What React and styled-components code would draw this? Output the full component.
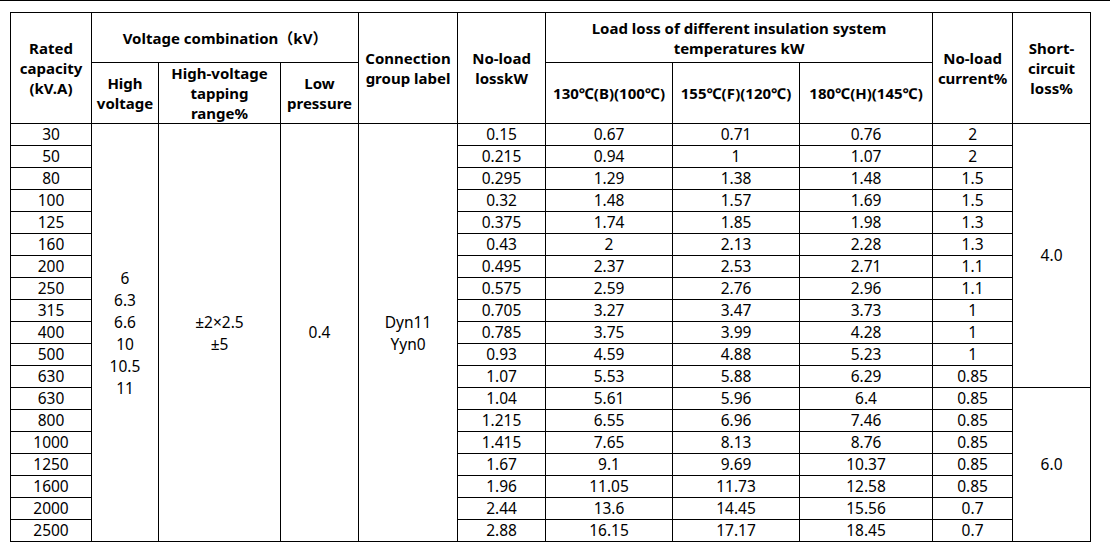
import React from "react";
import styled, { createGlobalStyle } from "styled-components";

const GlobalStyle = createGlobalStyle`
  html, body {
    margin: 0;
    padding: 0;
    background: #fff;
  }
`;

const Page = styled.div`
  border-top: 1px solid #000;
  padding: 11px 10px 12px 10px;
  font-family: "Noto Sans", "Open Sans", "Noto Sans CJK SC", sans-serif;
  color: #000;
`;

const Table = styled.table`
  border-collapse: collapse;
  table-layout: fixed;
  width: 1080px;
`;

const HeadRow = styled.tr`
  height: ${(p) => p.$h}px;
`;

const Row = styled.tr`
  height: 22px;
`;

const HeadCell = styled.th`
  border: 1px solid #000;
  padding: 0 2px;
  font-size: 15px;
  font-weight: 700;
  line-height: 20px;
  text-align: center;
  vertical-align: middle;
  white-space: ${(p) => (p.$nowrap ? "nowrap" : "normal")};
`;

const Cell = styled.td`
  border: 1px solid #000;
  padding: 0;
  font-size: 15.5px;
  line-height: 21px;
  text-align: center;
  vertical-align: middle;
`;

const Line = styled.div`
  line-height: 22px;
`;

// 열 너비: 원본 세로선 간격 그대로
const widths = [81, 67, 122, 78, 99, 88, 127, 127, 133, 80, 78];

const rows = [
  ["30", "0.15", "0.67", "0.71", "0.76", "2"],
  ["50", "0.215", "0.94", "1", "1.07", "2"],
  ["80", "0.295", "1.29", "1.38", "1.48", "1.5"],
  ["100", "0.32", "1.48", "1.57", "1.69", "1.5"],
  ["125", "0.375", "1.74", "1.85", "1.98", "1.3"],
  ["160", "0.43", "2", "2.13", "2.28", "1.3"],
  ["200", "0.495", "2.37", "2.53", "2.71", "1.1"],
  ["250", "0.575", "2.59", "2.76", "2.96", "1.1"],
  ["315", "0.705", "3.27", "3.47", "3.73", "1"],
  ["400", "0.785", "3.75", "3.99", "4.28", "1"],
  ["500", "0.93", "4.59", "4.88", "5.23", "1"],
  ["630", "1.07", "5.53", "5.88", "6.29", "0.85"],
  ["630", "1.04", "5.61", "5.96", "6.4", "0.85"],
  ["800", "1.215", "6.55", "6.96", "7.46", "0.85"],
  ["1000", "1.415", "7.65", "8.13", "8.76", "0.85"],
  ["1250", "1.67", "9.1", "9.69", "10.37", "0.85"],
  ["1600", "1.96", "11.05", "11.73", "12.58", "0.85"],
  ["2000", "2.44", "13.6", "14.45", "15.56", "0.7"],
  ["2500", "2.88", "16.15", "17.17", "18.45", "0.7"],
];

const highVoltages = ["6", "6.3", "6.6", "10", "10.5", "11"];

export default function App() {
  return (
    <>
      <GlobalStyle />
      <Page>
        <Table>
          <colgroup>
            {widths.map((w, i) => (
              <col key={i} style={{ width: w }} />
            ))}
          </colgroup>
          <thead>
            <HeadRow $h={50}>
              <HeadCell rowSpan={2}>
                Rated
                <br />
                capacity
                <br />
                (kV.A)
              </HeadCell>
              <HeadCell colSpan={3}>Voltage combination（kV）</HeadCell>
              <HeadCell rowSpan={2}>Connection group label</HeadCell>
              <HeadCell rowSpan={2}>
                No-load
                <br />
                losskW
              </HeadCell>
              <HeadCell colSpan={3}>
                Load loss of different insulation system
                <br />
                temperatures kW
              </HeadCell>
              <HeadCell rowSpan={2}>
                No-load
                <br />
                current%
              </HeadCell>
              <HeadCell rowSpan={2}>
                Short-
                <br />
                circuit
                <br />
                loss%
              </HeadCell>
            </HeadRow>
            <HeadRow $h={60}>
              <HeadCell>
                High
                <br />
                voltage
              </HeadCell>
              <HeadCell>
                High-voltage
                <br />
                tapping
                <br />
                range%
              </HeadCell>
              <HeadCell>
                Low
                <br />
                pressure
              </HeadCell>
              <HeadCell $nowrap>130℃(B)(100℃)</HeadCell>
              <HeadCell $nowrap>155℃(F)(120℃)</HeadCell>
              <HeadCell $nowrap>180℃(H)(145℃)</HeadCell>
            </HeadRow>
          </thead>
          <tbody>
            {rows.map((r, i) => (
              <Row key={i}>
                <Cell>{r[0]}</Cell>
                {i === 0 && (
                  <>
                    <Cell rowSpan={rows.length}>
                      {highVoltages.map((v) => (
                        <Line key={v}>{v}</Line>
                      ))}
                    </Cell>
                    <Cell rowSpan={rows.length}>
                      <Line>±2×2.5</Line>
                      <Line>±5</Line>
                    </Cell>
                    <Cell rowSpan={rows.length}>0.4</Cell>
                    <Cell rowSpan={rows.length}>
                      <Line>Dyn11</Line>
                      <Line>Yyn0</Line>
                    </Cell>
                  </>
                )}
                <Cell>{r[1]}</Cell>
                <Cell>{r[2]}</Cell>
                <Cell>{r[3]}</Cell>
                <Cell>{r[4]}</Cell>
                <Cell>{r[5]}</Cell>
                {i === 0 && <Cell rowSpan={12}>4.0</Cell>}
                {i === 12 && <Cell rowSpan={7}>6.0</Cell>}
              </Row>
            ))}
          </tbody>
        </Table>
      </Page>
    </>
  );
}
